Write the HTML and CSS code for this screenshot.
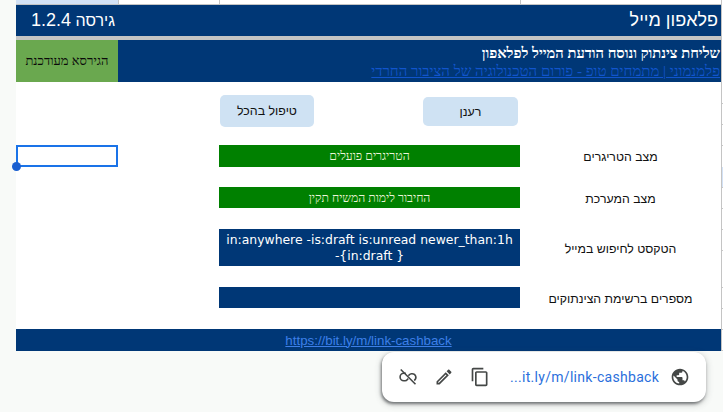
FILE: index.html
```html
<!DOCTYPE html>
<html lang="he" dir="rtl">
<head>
<meta charset="utf-8">
<title>פלאפון מייל</title>
<link rel="stylesheet" href="styles.css">
</head>
<body>
<div class="page">
  <div class="gutter">
    <i class="tick h103"></i><i class="tick h21"></i><i class="tick h21"></i><i class="tick hblue"></i><i class="tick h21"></i><i class="tick h21"></i><i class="tick h21"></i><i class="tick h37"></i><i class="tick h21"></i><i class="tick h21"></i><i class="tick h21"></i>
  </div>
  <main class="sheet">
    <div class="row strip"><div></div><div></div><div></div><div class="tint"></div></div>
    <div class="title-bar"><span class="title">פלאפון מייל</span><span class="version">גירסה <b>1.2.4</b></span></div>
    <div class="rule"></div>
    <div class="row sub">
      <div class="sub-text">
        <div class="sub-title">שליחת צינתוק ונוסח הודעת המייל לפלאפון</div>
        <a class="sub-link" href="#">פלמנמוני | מתמחים טופ - פורום הטכנולוגיה של הציבור החרדי</a>
      </div>
      <div class="updated">הגירסא מעודכנת</div>
    </div>
    <div class="row buttons">
      <div></div>
      <div class="btn-cell"><button class="btn btn-refresh">רענן</button></div>
      <div class="btn-cell-2"><button class="btn btn-all">טיפול בהכל</button></div>
    </div>
    <div class="row data h21"><div class="label">מצב הטריגרים</div><div class="bar green">הטריגרים פועלים</div><div></div><div class="selected"><span class="handle"></span></div></div>
    <div class="spacer"></div>
    <div class="row data h21"><div class="label">מצב המערכת</div><div class="bar green">החיבור לימות המשיח תקין</div></div>
    <div class="spacer"></div>
    <div class="row data h37"><div class="label">הטקסט לחיפוש במייל</div><div class="bar navy query" dir="ltr">in:anywhere -is:draft is:unread newer_than:1h<br>-{in:draft }</div></div>
    <div class="spacer"></div>
    <div class="row data h21"><div class="label">מספרים ברשימת הצינתוקים</div><div class="bar navy"></div></div>
    <div class="spacer"></div>
    <div class="footer"><a href="#" dir="ltr">https://bit.ly/m/link-cashback</a></div>
  </main>
</div>
<div class="popup" dir="ltr">
  <svg class="icon" viewBox="0 0 24 24"><path d="M9.500 7.500H7a4.500 4.500 0 0 0 0 9h1.500c1.200 0 2-.5 2.800-1.500l1-1.200M12.500 10.500l.8-1c.8-1 1.700-1.500 2.900-1.500H17a4.500 4.500 0 0 1 2.500 8.200" fill="none" stroke="#444746" stroke-width="1.900"/><path d="M3.300 3 21 20.700" stroke="#444746" stroke-width="1.900"/></svg>
  <svg class="icon" viewBox="0 0 24 24"><path d="M14.060 9.020l.92.92L5.920 19H5v-.92l9.060-9.060M17.660 3c-.25 0-.51.1-.7.29l-1.830 1.830 3.750 3.750 1.830-1.830c.39-.39.39-1.020 0-1.410l-2.340-2.340c-.2-.2-.45-.29-.71-.29zm-3.600 3.190L3 17.250V21h3.750L17.810 9.940l-3.750-3.750z"/></svg>
  <svg class="icon copy" viewBox="0 0 24 24"><path d="M16 1H4c-1.100 0-2 .9-2 2v14h2V3h12V1zm3 4H8c-1.100 0-2 .9-2 2v14c0 1.100.9 2 2 2h11c1.100 0 2-.9 2-2V7c0-1.100-.9-2-2-2zm0 16H8V7h11v14z"/></svg>
  <a class="popup-link" href="#">...it.ly/m/link-cashback</a>
  <svg class="icon globe" viewBox="0 0 24 24"><path d="M12 2C6.480 2 2 6.480 2 12s4.480 10 10 10 10-4.480 10-10S17.520 2 12 2zm-1 17.930c-3.950-.49-7-3.850-7-7.930 0-.62.08-1.210.21-1.790L9 15v1c0 1.100.9 2 2 2v1.930zm6.900-2.540c-.26-.81-1-1.390-1.900-1.390h-1v-3c0-.55-.45-1-1-1H8v-2h2c.55 0 1-.45 1-1V7h2c1.100 0 2-.9 2-2v-.41c2.930 1.190 5 4.060 5 7.410 0 2.080-.8 3.970-2.100 5.390z"/></svg>
</div>
</body>
</html>
```
FILE: styles.css
```css
* { box-sizing: border-box; }
html, body { margin: 0; padding: 0; }
body {
  width: 723px;
  height: 412px;
  overflow: hidden;
  background: #f8faf8;
  font-family: "Liberation Sans", Arial, sans-serif;
  position: relative;
}
.page { display: flex; height: 351px; padding-left: 16px; }
.gutter {
  width: 2px;
  flex: none;
  border-left: 1px solid #c4c4c4;
  background: #fff;
  display: flex;
  flex-direction: column;
}
.tick { display: block; border-bottom: 1px solid #c8c8c8; flex: none; }
.tick.h103 { height: 104px; }
.tick.h21 { height: 21px; }
.tick.hblue { height: 42px; background: linear-gradient(#fff 50%, #d3e2f6 50%); }
.tick.h37 { height: 37px; }
.sheet { width: 705px; flex: none; background: #fff; }
.row { display: grid; grid-template-columns: 201px 301px 101px 102px; }
.strip { height: 5px; border-bottom: 1px solid #c4c4c4; }
.strip > div { border-left: 1px solid #c4c4c4; }
.strip .tint { background: #d3e2f6; border-left: 0; }
.title-bar {
  height: 31px;
  background: #003776;
  color: #fff;
  display: flex;
  justify-content: space-between;
  align-items: center;
  padding: 0 3px 0 0;
}
.title { font-size: 18px; }
.version { width: 100px; padding-right: 1px; font-size: 16px; white-space: nowrap; }
.version b { font-size: 18px; font-weight: 400; }
.rule { height: 4px; background: #c4c4c4; }
.sub { height: 42px; background: #003776; grid-template-columns: 603px 102px; }
.sub-text { padding: 4px 1px 0 0; color: #fff; }
.sub-title { font-family: "Liberation Serif", serif; font-weight: 700; font-size: 14.7px; line-height: 18px; white-space: nowrap; }
.sub-link { display: block; font-family: "Liberation Serif", serif; font-size: 15px; line-height: 19px; color: #1155cc; text-decoration: underline; white-space: nowrap; }
.updated {
  background: #6aa84f;
  color: #0a0a0a;
  display: flex;
  align-items: center;
  justify-content: center;
  font-family: "Liberation Serif", serif;
  font-size: 13px;
  white-space: nowrap;
}
.buttons { height: 63px; }
.btn {
  border: 0;
  border-radius: 5px;
  background: #cfe2f3;
  color: #111;
  font-family: "Liberation Sans", sans-serif;
  font-size: 12.400px;
  padding: 0;
}
.btn-cell { padding: 15px 2px 0 0; }
.btn-refresh { width: 95px; height: 29px; }
.btn-cell-2 { grid-column: 2; grid-row: 1; padding: 13px 206px 0 0; }
.btn-all { width: 94px; height: 32px; }
.buttons > div:first-child { grid-column: 1; grid-row: 1; }
.buttons .btn-cell { grid-column: 2; grid-row: 1; }
.h21 { height: 21px; }
.h37 { height: 37px; }
.spacer { height: 21px; }
.label {
  display: flex;
  align-items: center;
  justify-content: center;
  padding-top: 2px;
  font-size: 12.300px;
  color: #111;
  white-space: nowrap;
}
.bar {
  display: flex;
  align-items: center;
  justify-content: center;
  padding-top: 1px;
  color: #ecf5d8;
  font-family: "Liberation Serif", serif;
  font-size: 12.200px;
  white-space: nowrap;
}
.green { background: #008000; }
.navy { background: #003776; }
.query {
  color: #fff;
  display: block;
  text-align: center;
  font-family: "DejaVu Sans", sans-serif;
  font-size: 12.400px;
  line-height: 16px;
  padding-top: 3px;
}
.selected { grid-column: 4; border: 2px solid #1a73e8; height: 22px; position: relative; }
.handle {
  position: absolute;
  left: -6px;
  bottom: -6px;
  width: 9px;
  height: 9px;
  border-radius: 50%;
  background: #1a5fd0;
}
.footer {
  height: 22px;
  background: #003776;
  display: flex;
  justify-content: center;
  align-items: center;
  font-size: 13.300px;
}
.footer a { color: #3d7fe8; }
.popup {
  position: absolute;
  left: 382px;
  top: 352px;
  width: 324px;
  height: 50px;
  background: #fff;
  border-radius: 12px;
  box-shadow: -1px 2px 3px rgba(40,44,47,.55), 0 2px 7px rgba(60,64,67,.3);
  display: flex;
  align-items: center;
  padding-left: 16px;
}
.icon { width: 20px; height: 20px; fill: #444746; flex: none; margin-right: 16px; }
.icon.copy { margin-right: 20px; }
.popup-link {
  font-family: Roboto, sans-serif;
  font-size: 14px;
  letter-spacing: .3px;
  color: #2b6fdc;
  text-decoration: none;
  white-space: nowrap;
  width: 148px;
  margin-right: 12px;
  flex: none;
}
.icon.globe { margin-right: 0; width: 20px; height: 20px; }
```
